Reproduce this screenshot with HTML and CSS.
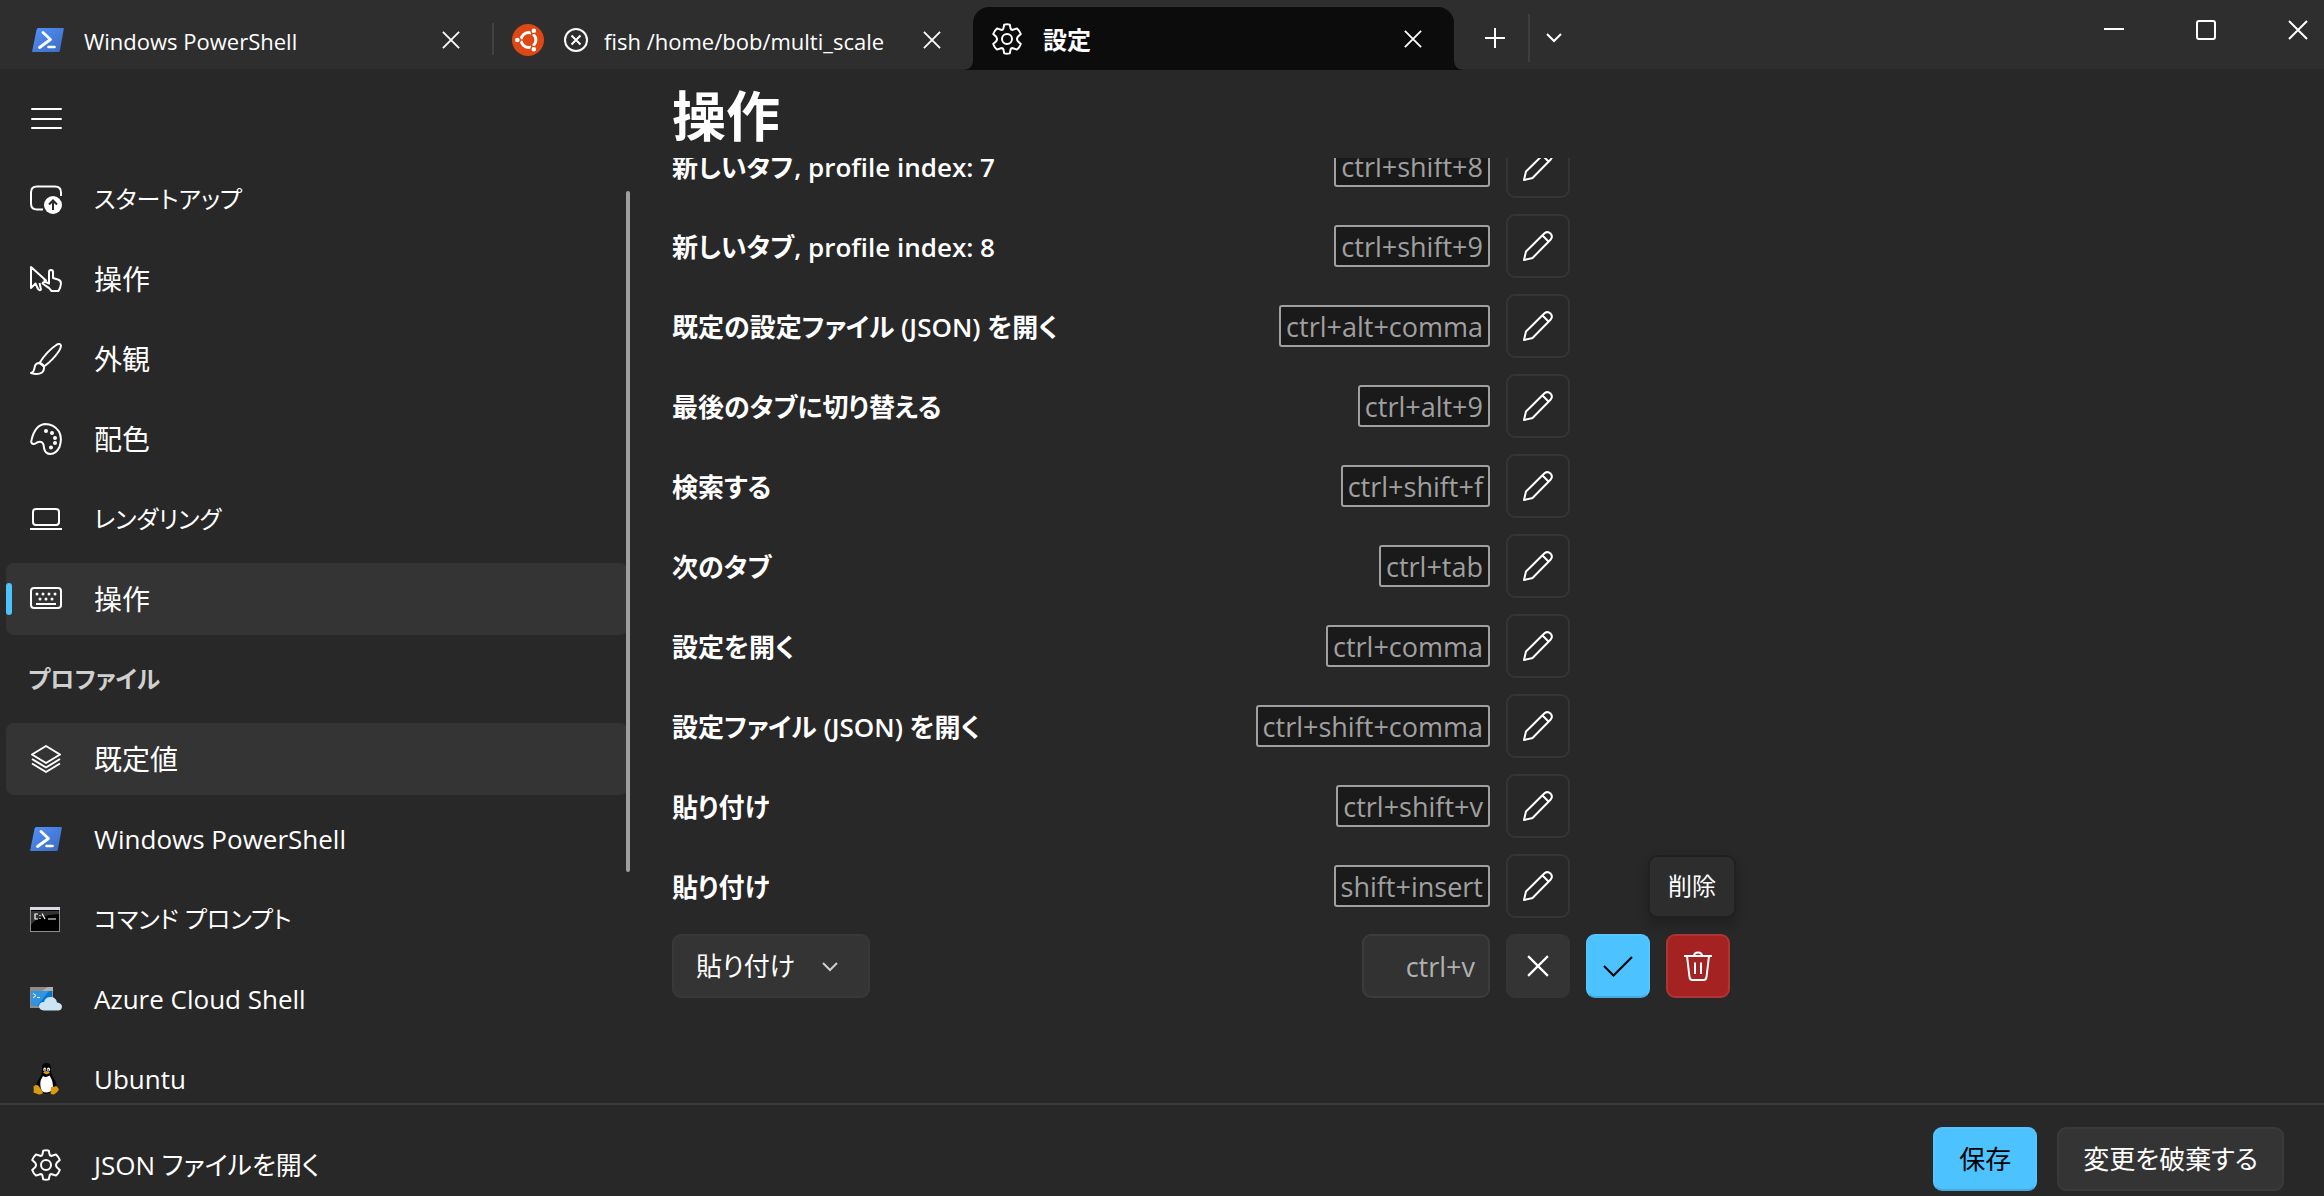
FILE: index.html
```html
<!DOCTYPE html>
<html lang="ja">
<head>
<meta charset="utf-8">
<title>設定</title>
<link rel="stylesheet" href="styles.css">
</head>
<body>
<svg class="defs" aria-hidden="true">
  <defs>
    <linearGradient id="ps-fill" x1="0" y1="0" x2="1" y2="1">
      <stop offset="0" stop-color="#5391fe"/><stop offset="1" stop-color="#3b6bbd"/>
    </linearGradient>
    <symbol id="powershell" viewBox="0 0 32 32">
      <path d="M6.400 4H31.200Q32 4 31.800 5L27.800 27Q27.500 28 26.500 28H.8Q0 28 .2 27L4.600 5.500Q5 4 6.400 4Z" fill="url(#ps-fill)"/>
      <path d="M11 8.500L18.500 15.500L7.500 23.500" fill="none" stroke="#fff" stroke-width="2.800" stroke-linecap="round" stroke-linejoin="round"/>
      <path d="M16.500 23H22.500" stroke="#fff" stroke-width="2.600" stroke-linecap="round"/>
    </symbol>
    <symbol id="close" viewBox="0 0 20 20"><path d="M1 1L19 19M19 1L1 19" fill="none" stroke="currentColor" stroke-width="2"/></symbol>
    <symbol id="gear" viewBox="0 0 32 32">
      <path d="M13.200 1.600Q16 .8 18.800 1.600L19.600 5.600Q20.200 7.200 22 6.800L26 5.400Q28.600 7.600 29.800 11L26.800 13.800Q25.200 16 26.800 18.200L29.800 21Q28.600 24.400 26 26.600L22 25.200Q20.200 24.800 19.600 26.400L18.800 30.400Q16 31.200 13.200 30.400L12.400 26.400Q11.800 24.800 10 25.200L6 26.600Q3.400 24.400 2.200 21L5.200 18.200Q6.800 16 5.200 13.800L2.200 11Q3.400 7.600 6 5.400L10 6.800Q11.800 7.200 12.400 5.600Z" fill="none" stroke="currentColor" stroke-width="2" stroke-linejoin="round"/>
      <circle cx="16" cy="16" r="5" fill="none" stroke="currentColor" stroke-width="2"/>
    </symbol>
    <symbol id="chevron" viewBox="0 0 16 10"><path d="M1 1L8 8L15 1" fill="none" stroke="currentColor" stroke-width="2"/></symbol>
    <symbol id="pencil" viewBox="0 0 30 30">
      <path d="M1 29L3 20.500L21.500 2.300Q24.500 -.2 27.500 2.500Q30.200 5.500 27.700 8.500L9.500 27Z M19.500 4.500L25.500 10.500" fill="none" stroke="currentColor" stroke-width="2" stroke-linejoin="round"/>
    </symbol>
  </defs>
</svg>

<header class="titlebar">
  <div class="tab">
    <svg class="icon"><use href="#powershell"/></svg>
    <span class="tab-title">Windows PowerShell</span>
    <button class="plain" aria-label="タブを閉じる"><svg class="x"><use href="#close"/></svg></button>
  </div>
  <div class="tab divided">
    <svg class="icon" viewBox="0 0 32 32">
      <circle cx="16" cy="16" r="16" fill="#dd4814"/>
      <circle cx="16.500" cy="16" r="7.400" fill="none" stroke="#fff" stroke-width="3"/>
      <path d="M16.500 16L5 16M16.500 16L22 6.500M16.500 16L22 25.500" stroke="#dd4814" stroke-width="1.600"/>
      <circle cx="16.500" cy="16" r="5.500" fill="#dd4814"/>
      <g fill="#fff" stroke="#dd4814" stroke-width="1.200"><circle cx="5.400" cy="16" r="2.900"/><circle cx="21.800" cy="6.800" r="2.900"/><circle cx="21.800" cy="25.200" r="2.900"/></g>
    </svg>
    <svg class="state" viewBox="0 0 24 24"><g fill="none" stroke="currentColor" stroke-width="2"><circle cx="12" cy="12" r="11"/><path d="M7.500 7.500L16.500 16.500M16.500 7.500L7.500 16.500"/></g></svg>
    <span class="tab-title">fish /home/bob/multi_scale</span>
    <button class="plain" aria-label="タブを閉じる"><svg class="x"><use href="#close"/></svg></button>
  </div>
  <div class="tab active">
    <svg class="icon"><use href="#gear"/></svg>
    <span class="tab-title">設定</span>
    <button class="plain" aria-label="タブを閉じる"><svg class="x"><use href="#close"/></svg></button>
  </div>
  <div class="new-tab">
    <button class="plain add" aria-label="新しいタブ"><svg class="glyph" viewBox="0 0 20 20"><path d="M10 0V20M0 10H20" stroke="currentColor" stroke-width="2"/></svg></button>
    <button class="plain more" aria-label="プロファイルの選択"><svg class="chev"><use href="#chevron"/></svg></button>
  </div>
  <div class="window-buttons">
    <button class="plain" aria-label="最小化"><svg class="glyph" viewBox="0 0 20 20"><path d="M0 9H20" stroke="currentColor" stroke-width="2"/></svg></button>
    <button class="plain" aria-label="最大化"><svg class="glyph" viewBox="0 0 20 20"><rect x="1" y="1" width="18" height="18" rx="2" fill="none" stroke="currentColor" stroke-width="2"/></svg></button>
    <button class="plain" aria-label="閉じる"><svg class="glyph"><use href="#close"/></svg></button>
  </div>
</header>

<div class="workspace">
  <nav class="sidebar">
    <button class="plain menu" aria-label="メニュー"><svg class="icon" viewBox="0 0 32 32"><path d="M2 6H31M2 16H31M2 25H31" stroke="currentColor" stroke-width="2" stroke-linecap="round"/></svg></button>
    <div class="nav-scroll">
      <a class="nav-item kana" href="#startup">
        <svg class="icon" viewBox="0 0 32 32"><path d="M13 26.500H7Q1 26.500 1 20.500V9.500Q1 3.500 7 3.500H25Q31 3.500 31 9.500V13" fill="none" stroke="currentColor" stroke-width="2"/><circle cx="23" cy="22" r="9" fill="currentColor"/><path d="M23 27V18M19 21.500L23 17.500L27 21.500" fill="none" stroke="#282828" stroke-width="2"/></svg>
        スタートアップ</a>
      <a class="nav-item" href="#interaction">
        <svg class="icon" viewBox="0 0 32 32"><g fill="none" stroke="currentColor" stroke-width="2" stroke-linejoin="round"><path d="M13.500 17.500H16L1 4V25L5.500 20.500L8 26Q9.500 28 11 26.500L9.500 20"/><path d="M19 18V9Q19 7 21 7Q23 7 23 9V15L28 16.500Q31 17.500 31 20.500Q30.500 25 28.500 28H21.500Q20 25 16 23L12.500 20.500Q13 18.500 15.500 19L19 20.500Z"/></g></svg>
        操作</a>
      <a class="nav-item" href="#appearance">
        <svg class="icon" viewBox="0 0 32 32"><g fill="none" stroke="currentColor" stroke-width="2" stroke-linejoin="round"><path d="M9.500 20Q17 8 27 1.500Q30 0 31 2.500Q31 5 29 8Q23 17 14 23.500Z"/><path d="M9.500 20Q5 20 4.500 25Q4 29 1 30Q8 32 12 29.500Q14.500 27.500 14 23.500Q12.500 20.500 9.500 20Z"/></g></svg>
        外観</a>
      <a class="nav-item" href="#colors">
        <svg class="icon" viewBox="0 0 32 32"><path d="M1.500 17Q.5 20.500 3.500 21Q5 21.200 7 19.500Q11 17.500 13 20.500Q14 22.500 14 25Q15 31 20.500 31Q26 31 29.500 24Q32.500 15 29 8.500Q24 1 15 1Q5 2 1.500 17Z" fill="none" stroke="currentColor" stroke-width="2"/><g fill="currentColor"><circle cx="16" cy="8" r="2"/><circle cx="22" cy="10" r="2"/><circle cx="25" cy="15" r="2"/><circle cx="25" cy="20" r="2"/><circle cx="21" cy="24.500" r="2"/></g></svg>
        配色</a>
      <a class="nav-item kana" href="#rendering">
        <svg class="icon" viewBox="0 0 32 32"><rect x="3" y="6" width="26" height="16" rx="3" fill="none" stroke="currentColor" stroke-width="2"/><path d="M0 26H32" stroke="currentColor" stroke-width="2"/></svg>
        レンダリング</a>
      <a class="nav-item filled selected" href="#actions" aria-current="page">
        <svg class="icon" viewBox="0 0 32 32"><rect x="1" y="5" width="30" height="20" rx="3" fill="none" stroke="currentColor" stroke-width="2"/><path d="M6 21H26" stroke="currentColor" stroke-width="2"/><g fill="currentColor"><circle cx="7" cy="11" r="1.500"/><circle cx="13" cy="11" r="1.500"/><circle cx="19" cy="11" r="1.500"/><circle cx="25" cy="11" r="1.500"/><circle cx="10" cy="16" r="1.500"/><circle cx="16" cy="16" r="1.500"/><circle cx="22" cy="16" r="1.500"/></g></svg>
        操作</a>
      <h2 class="nav-heading">プロファイル</h2>
      <a class="nav-item filled" href="#defaults">
        <svg class="icon" viewBox="0 0 32 32"><g fill="none" stroke="currentColor" stroke-width="2" stroke-linejoin="round"><path d="M16 3L30 11.500L16 20L2 11.500Z"/><path d="M2 16L16 24.500L30 16M2 20.500L16 29L30 20.500"/></g></svg>
        既定値</a>
      <a class="nav-item latin" href="#powershell-profile"><svg class="icon"><use href="#powershell"/></svg>Windows PowerShell</a>
      <a class="nav-item kana" href="#cmd">
        <svg class="icon" viewBox="0 0 32 32"><rect x=".5" y="4.500" width="29" height="24" fill="#000" stroke="#8a8d91"/><path d="M1 8H29V11Q8 12 1 22Z" fill="#333"/><rect x="0" y="4" width="30" height="3" fill="#d8dbe0"/><path d="M8 11H5V16H8M10 12V13M10 15V16M12 10.500L15 16M18 16H26" fill="none" stroke="#fff" stroke-width="1.200"/></svg>
        コマンド プロンプト</a>
      <a class="nav-item latin" href="#azure">
        <svg class="icon" viewBox="0 0 32 32"><rect x="0" y="4" width="23" height="21" fill="#8c8c8c"/><path d="M12 8L18 4H23V8Z" fill="#b0b0b0"/><rect x="1" y="8" width="21" height="15" fill="#0078d4"/><path d="M1 8H19L7 23H1Z" fill="#3294de"/><path d="M3 10.500L6 12.500L3 15M7 14.500H10" fill="none" stroke="#fff"/><path d="M14 27.500Q9 27 9 23Q9.500 19 14 19Q15.500 14 20.500 14Q26 14 27 19.500Q32 20 32 24Q31.500 27.500 28 27.500Z" fill="#cce4f4"/></svg>
        Azure Cloud Shell</a>
      <a class="nav-item latin" href="#ubuntu">
        <svg class="icon" viewBox="0 0 32 32"><path d="M12 4Q12 0 16.500 0Q21 0 21 5Q20.500 11 24 15.500Q28 22 26 28L16 31L6 27Q5 21 9.500 15Q12.500 11 12 4Z" fill="#050505"/><path d="M13 13Q16 15 19.500 12.500Q24 19 22.500 26Q18 32 12 28Q8 20 13 13Z" fill="#fff"/><ellipse cx="14.700" cy="6.500" rx="1.400" ry="1.900" fill="#eee"/><ellipse cx="18.500" cy="6.500" rx="1.600" ry="1.900" fill="#eee"/><circle cx="15" cy="7" r=".7"/><circle cx="18.200" cy="7" r=".7"/><path d="M13 9.500Q16.500 6.500 20 9.500Q17 13 13 9.500Z" fill="#d99a12"/><path d="M4 23Q7 21 9 23.500L13 29Q12.500 32 9 31.500L3.500 29.500Q4 27 3.500 24ZM21 24Q24 24 26.500 23L29 26.500Q28 29 24 31.500Q20 32 20.500 28Z" fill="#d99a12"/></svg>
        Ubuntu</a>
    </div>
    <span class="scroll-thumb"></span>
  </nav>

  <main class="content">
    <h1 class="page-title">操作</h1>
    <div class="list-clip">
      <ul class="bindings">
        <li class="binding"><span class="name">新しいタブ, profile index: 7</span><kbd class="keys">ctrl+shift+8</kbd><button class="square" aria-label="編集"><svg class="edit"><use href="#pencil"/></svg></button></li>
        <li class="binding"><span class="name">新しいタブ, profile index: 8</span><kbd class="keys">ctrl+shift+9</kbd><button class="square" aria-label="編集"><svg class="edit"><use href="#pencil"/></svg></button></li>
        <li class="binding"><span class="name">既定の設定ファイル (JSON) を開く</span><kbd class="keys">ctrl+alt+comma</kbd><button class="square" aria-label="編集"><svg class="edit"><use href="#pencil"/></svg></button></li>
        <li class="binding"><span class="name">最後のタブに切り替える</span><kbd class="keys">ctrl+alt+9</kbd><button class="square" aria-label="編集"><svg class="edit"><use href="#pencil"/></svg></button></li>
        <li class="binding"><span class="name">検索する</span><kbd class="keys">ctrl+shift+f</kbd><button class="square" aria-label="編集"><svg class="edit"><use href="#pencil"/></svg></button></li>
        <li class="binding"><span class="name">次のタブ</span><kbd class="keys">ctrl+tab</kbd><button class="square" aria-label="編集"><svg class="edit"><use href="#pencil"/></svg></button></li>
        <li class="binding"><span class="name">設定を開く</span><kbd class="keys">ctrl+comma</kbd><button class="square" aria-label="編集"><svg class="edit"><use href="#pencil"/></svg></button></li>
        <li class="binding"><span class="name">設定ファイル (JSON) を開く</span><kbd class="keys">ctrl+shift+comma</kbd><button class="square" aria-label="編集"><svg class="edit"><use href="#pencil"/></svg></button></li>
        <li class="binding"><span class="name">貼り付け</span><kbd class="keys">ctrl+shift+v</kbd><button class="square" aria-label="編集"><svg class="edit"><use href="#pencil"/></svg></button></li>
        <li class="binding"><span class="name">貼り付け</span><kbd class="keys">shift+insert</kbd><button class="square" aria-label="編集"><svg class="edit"><use href="#pencil"/></svg></button></li>
        <li class="binding editing">
          <span class="picker">
            <select aria-label="操作"><option>貼り付け</option></select>
            <svg class="chev"><use href="#chevron"/></svg>
          </span>
          <input class="key-input" type="text" value="ctrl+v" aria-label="キー">
          <button class="square cancel" aria-label="キャンセル"><svg class="cross"><use href="#close"/></svg></button>
          <button class="square accept" aria-label="同意する"><svg class="edit" viewBox="0 0 30 30"><path d="M1 15L10.500 24.500L29 6" fill="none" stroke="currentColor" stroke-width="2"/></svg></button>
          <span class="delete-wrap">
            <button class="square delete" aria-label="削除"><svg class="edit" viewBox="0 0 30 30"><g fill="none" stroke="currentColor" stroke-width="2"><path d="M1 5H29M11 5Q11 1.500 15 1.500Q19 1.500 19 5M4 5L6.500 26Q7 29 9.500 29H20.500Q23 29 23.500 26L26 5M12 11.500V23M18 11.500V23"/></g></svg></button>
            <span class="tooltip" role="tooltip">削除</span>
          </span>
        </li>
      </ul>
    </div>
  </main>
</div>

<footer class="footer">
  <a class="nav-item latin" href="#json"><svg class="icon"><use href="#gear"/></svg>JSON ファイルを開く</a>
  <button class="action primary">保存</button>
  <button class="action">変更を破棄する</button>
</footer>
</body>
</html>
```

FILE: styles.css
```css
* { box-sizing: border-box; }

body {
  margin: 0;
  height: 100vh;
  display: flex;
  flex-direction: column;
  overflow: hidden;
  background: #282828;
  color: #fff;
  font-family: "Open Sans", "Noto Sans CJK JP", sans-serif;
  font-size: 26px;
  line-height: 40px;
  font-feature-settings: "palt";
}

button, input, select { font: inherit; color: inherit; font-feature-settings: inherit; }
svg { display: block; flex: none; }
.defs { position: absolute; width: 0; height: 0; }

.icon { width: 32px; height: 32px; }
.state { width: 24px; height: 24px; }
.glyph { width: 20px; height: 20px; }
.x { width: 18px; height: 18px; }
.cross { width: 22px; height: 22px; }
.chev { width: 16px; height: 10px; }
.edit { width: 30px; height: 30px; }

.plain {
  display: flex;
  align-items: center;
  justify-content: center;
  padding: 0;
  border: 0;
  background: none;
}

/* Title bar */
.titlebar {
  flex: none;
  display: flex;
  height: 70px;
  padding-top: 7px;
  background: #2e2e2e;
  border-bottom: 1px solid #282828;
}
.tab {
  position: relative;
  display: flex;
  align-items: center;
  gap: 20px;
  width: 492px;
  padding: 3px 32px 0;
  font-size: 22px;
  line-height: 32px;
}
.tab-title { flex: 1; min-width: 0; padding-top: 2px; overflow: hidden; white-space: nowrap; }
.tab.divided { width: 481px; padding-left: 20px; }
.tab.divided::before {
  content: "";
  position: absolute;
  left: 0;
  top: 16px;
  width: 2px;
  height: 32px;
  background: #414141;
}
.tab.divided .tab-title { flex: 0 1 292px; margin-left: -4px; }
.tab.divided .plain { margin-left: auto; }
.tab.active {
  margin-bottom: -1px;
  padding-top: 0;
  width: 481px;
  padding-left: 18px;
  border-radius: 16px 16px 0 0;
  background: #0c0c0c;
  font-size: 24px;
  font-weight: 600;
}
.tab.active::before, .tab.active::after {
  content: "";
  position: absolute;
  bottom: 0;
  width: 8px;
  height: 8px;
}
.tab.active::before { left: -8px; background: radial-gradient(circle at 0 0, transparent 7px, #0c0c0c 8px); }
.tab.active::after { right: -8px; background: radial-gradient(circle at 100% 0, transparent 7px, #0c0c0c 8px); }
.new-tab { display: flex; align-items: center; }
.add { width: 74px; height: 48px; padding-left: 8px; }
.more { width: 52px; height: 48px; padding-right: 2px; border-left: 2px solid #3e3e3e; }
.window-buttons { margin-left: auto; display: flex; height: 46px; }
.window-buttons .plain { width: 92px; }
.window-buttons .plain:last-child { width: 72px; padding-left: 20px; }

/* Sidebar */
.workspace { flex: 1; min-height: 0; display: flex; }
.sidebar {
  position: relative;
  flex: none;
  width: 630px;
  display: flex;
  flex-direction: column;
}
.menu { width: 72px; height: 80px; flex: none; margin-left: 10px; margin-top: 9px; }
.nav-scroll { flex: 1; min-height: 0; padding-top: 4px; overflow: hidden; }
.nav-item {
  position: relative;
  display: flex;
  align-items: center;
  gap: 32px;
  height: 72px;
  margin: 0 2px 8px 6px;
  padding: 0 24px;
  border-radius: 8px;
  color: #fff;
  font-size: 28px;
  text-decoration: none;
  white-space: nowrap;
}
.nav-item.latin { font-size: 26px; }
.nav-item.kana { font-size: 24px; }
.filled { background: #343434; }
.selected::before {
  content: "";
  position: absolute;
  left: 0;
  top: 20px;
  width: 6px;
  height: 32px;
  border-radius: 3px;
  background: #4cc2ff;
}
.nav-heading {
  margin: 0 0 8px;
  padding: 16px 28px;
  color: #cfcfcf;
  font-size: 24px;
  font-weight: 600;
}
.scroll-thumb {
  position: absolute;
  right: 0;
  top: 121px;
  width: 4px;
  height: 681px;
  border-radius: 2px;
  background: #9f9f9f;
}

/* Key bindings */
.content {
  flex: 1;
  min-width: 0;
  padding-left: 42px;
  display: flex;
  flex-direction: column;
}
.page-title { margin: 0; padding: 10px 0 6px; font-size: 54px; line-height: 72px; font-weight: 600; }
.list-clip { flex: 1; min-height: 0; overflow: hidden; }
.bindings { margin: -32px 0 0; padding: 0; list-style: none; }
.binding {
  display: flex;
  align-items: center;
  gap: 16px;
  height: 80px;
  max-width: 898px;
}
.binding.editing { max-width: 1058px; }
.name { margin-right: auto; padding-top: 2px; font-weight: 600; }
.keys {
  padding: 2px 5px 0;
  border: 2px solid #a0a0a0;
  border-radius: 3px;
  background: #1a1a1a;
  color: #a0a0a0;
  font-family: inherit;
  font-size: 27px;
  line-height: 36px;
}
.square {
  flex: none;
  display: grid;
  place-items: center;
  width: 64px;
  height: 64px;
  padding: 0;
  border: 2px solid #353535;
  border-radius: 9px;
  background: transparent;
}
.picker { position: relative; margin-right: auto; color: #fff; }
.picker select {
  appearance: none;
  display: block;
  width: 198px;
  height: 64px;
  padding: 0 22px;
  border: 2px solid #383838;
  border-radius: 9px;
  background: #343434;
}
.picker .chev { position: absolute; right: 32px; top: 28px; color: #cfcfcf; pointer-events: none; }
.key-input {
  width: 128px;
  height: 64px;
  padding: 0 13px;
  border: 2px solid #3c3c3c;
  border-radius: 9px;
  background: #323232;
  color: #b0b0b0;
  font-size: 27px;
  text-align: right;
}
.cancel { background: #343434; }
.accept { border-color: #54c5ff; border-bottom-color: #46a8dc; background: #4cc2ff; color: #000; }
.delete { border-color: #ad3535; background: #a52222; }
.delete-wrap { position: relative; }
.tooltip {
  position: absolute;
  right: -6px;
  bottom: 80px;
  padding: 11px 18px 12px;
  border: 2px solid #202020;
  border-radius: 9px;
  background: #2d2d2d;
  box-shadow: 0 6px 12px rgba(0, 0, 0, .22);
  font-size: 24px;
  line-height: 36px;
  white-space: nowrap;
}

/* Footer */
.footer {
  flex: none;
  display: flex;
  align-items: flex-start;
  gap: 20px;
  height: 93px;
  padding: 22px 40px 0 0;
  border-top: 2px solid #3a3a3a;
}
.footer .nav-item { margin: 2px auto 0 6px; }
.action {
  height: 64px;
  padding: 0 24px;
  border: 2px solid #3a3a3a;
  border-radius: 9px;
  background: #343434;
  white-space: nowrap;
}
.primary { border-color: #54c5ff; border-bottom-color: #46a8dc; background: #4cc2ff; color: #000; }
```
